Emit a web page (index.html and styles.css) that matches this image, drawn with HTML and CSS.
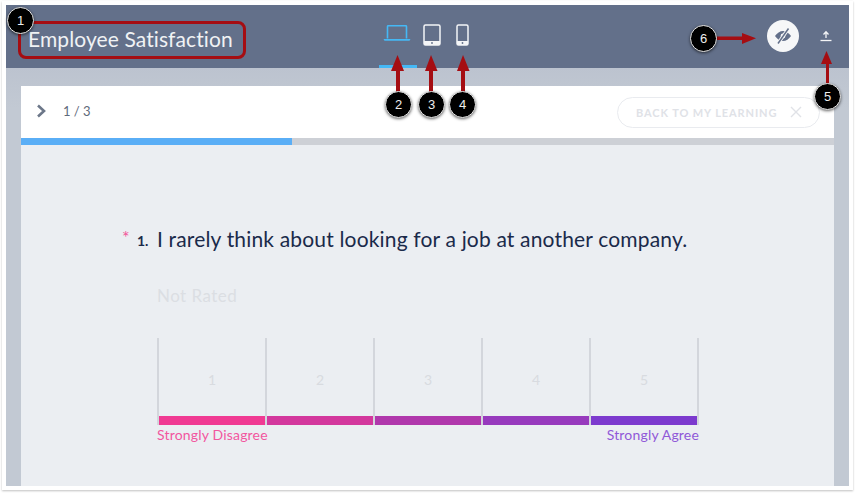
FILE: index.html
```html
<!DOCTYPE html>
<html lang="en">
<head>
  <meta charset="UTF-8">
  <meta name="viewport" content="width=device-width, initial-scale=1.0">
  <title>Employee Satisfaction</title>
  <link rel="stylesheet" href="styles.css">
</head>
<body>
  <div class="window">
    <header class="topbar">
      <h1 class="title">Employee Satisfaction</h1>
      <nav class="devices">
        <div class="device active">
          <svg width="28" height="17" viewBox="0 0 28 17"><path d="M4.500 13.500V1.700a1 1 0 0 1 1-1h17a1 1 0 0 1 1 1v11.800" fill="none" stroke="#45b8f5" stroke-width="1.600"/><path d="M0.500 14h27l-1 1.800H1.500z" fill="#45b8f5"/></svg>
        </div>
        <div class="device">
          <svg width="18" height="22" viewBox="0 0 18 22"><rect x="1" y="1" width="16" height="20" rx="1.500" fill="none" stroke="#f4f5f7" stroke-width="1.500"/><rect x="1" y="17" width="16" height="4" fill="#f4f5f7"/><circle cx="9" cy="19" r="0.900" fill="#63708a"/></svg>
        </div>
        <div class="device">
          <svg width="13" height="22" viewBox="0 0 13 22"><rect x="1" y="1" width="11" height="20" rx="1.500" fill="none" stroke="#f4f5f7" stroke-width="1.500"/><rect x="1" y="17" width="11" height="4" fill="#f4f5f7"/><circle cx="6.500" cy="19" r="0.900" fill="#63708a"/></svg>
        </div>
      </nav>
      <div class="actions">
        <button class="preview-toggle">
          <svg width="18" height="16" viewBox="0 0 18 16"><path d="M1 8c2-3 5-5 8-5s6 2 8 5c-2 3-5 5-8 5S3 11 1 8z" fill="#63708a"/><circle cx="9" cy="8" r="2.400" fill="#f6f7f8"/><path d="M14.500 0.500L4 15.500" stroke="#f6f7f8" stroke-width="3.400"/><path d="M14.500 0.500L4 15.500" stroke="#63708a" stroke-width="1.500"/></svg>
        </button>
        <button class="publish">
          <svg width="12" height="12" viewBox="0 0 12 12"><path d="M6 8V3M3.500 4.500L6 1.800l2.500 2.700" fill="none" stroke="#f4f5f7" stroke-width="1.300"/><path d="M0.500 10.500h11" stroke="#f4f5f7" stroke-width="1.300"/></svg>
        </button>
      </div>
    </header>

    <main class="stage">
      <div class="card">
        <div class="card-head">
          <svg class="chevron" width="11" height="14" viewBox="0 0 11 14"><path d="M2 1.500L8 7l-6 5.500" fill="none" stroke="#6c7789" stroke-width="2.600"/></svg>
          <span class="counter">1 / 3</span>
          <div class="back-btn">
            <span>BACK TO MY LEARNING</span>
            <svg width="12" height="12" viewBox="0 0 12 12"><path d="M1 1l10 10M11 1L1 11" stroke="#e0e2e7" stroke-width="1.400"/></svg>
          </div>
        </div>
        <div class="progress"><div class="progress-fill"></div></div>
        <div class="question">
          <div class="question-row">
            <span class="required">*</span>
            <span class="number">1.</span>
            <span class="text">I rarely think about looking for a job at another company.</span>
          </div>
          <div class="rating-label">Not Rated</div>
          <div class="scale">
            <div class="step"><span>1</span><i class="c1"></i></div>
            <div class="step"><span>2</span><i class="c2"></i></div>
            <div class="step"><span>3</span><i class="c3"></i></div>
            <div class="step"><span>4</span><i class="c4"></i></div>
            <div class="step"><span>5</span><i class="c5"></i></div>
          </div>
          <div class="scale-labels">
            <span class="low">Strongly Disagree</span>
            <span class="high">Strongly Agree</span>
          </div>
        </div>
      </div>
    </main>
  </div>

  <!-- callouts over the screenshot -->
  <div class="title-box"></div>
  <svg class="arrows" width="855" height="493" viewBox="0 0 855 493">
    <g fill="#a50d12" stroke="none">
      <rect x="396" y="68" width="4" height="25"/><path d="M391 71L397.500 55l6.500 16z"/>
      <rect x="429" y="68" width="4" height="25"/><path d="M425 71L431 55l6.500 16z"/>
      <rect x="461" y="68" width="4" height="25"/><path d="M457 71L463 55l6.500 16z"/>
      <rect x="826" y="62" width="3" height="22"/><path d="M821 64L826.500 51l5.500 13z"/>
      <rect x="716" y="36.500" width="28" height="3.500"/><path d="M742 33L756 38.300 742 44z"/>
    </g>
  </svg>
  <div class="badge b1">1</div>
  <div class="badge b2">2</div>
  <div class="badge b3">3</div>
  <div class="badge b4">4</div>
  <div class="badge b5">5</div>
  <div class="badge b6">6</div>
</body>
</html>
```

FILE: styles.css
```css
html, body {
  margin: 0;
  height: 493px;
  overflow: hidden;
}

body {
  background: #fff;
  font-family: 'Lato', sans-serif;
  padding: 5px 6px 7px;
  box-sizing: border-box;
  position: relative;
}

.window {
  height: 481px;
  display: flex;
  flex-direction: column;
  box-shadow: 0 0 0 4px #fff, 0 1px 2px 4px #c0c0c0;
}

.topbar {
  flex: 0 0 63px;
  background: #63708a;
  display: grid;
  grid-template-columns: 1fr auto 1fr;
  align-items: start;
}

.title {
  margin: 20px 0 0 22px;
  font-size: 21px;
  font-weight: 400;
  line-height: 28px;
  letter-spacing: 0.1px;
  color: #f0f2f4;
  white-space: nowrap;
}

.devices {
  display: flex;
  align-items: flex-start;
  margin-left: -8px;
}

.device {
  height: 63px;
  box-sizing: border-box;
  padding-top: 19px;
  margin-right: 15px;
  display: flex;
  justify-content: center;
}

.device.active {
  width: 38px;
  margin-right: 6px;
  border-bottom: 3px solid #45b8f5;
  padding: 20px 2px 0 0;
}

.device + .device + .device {
  margin-right: 0;
  margin-left: 0;
}

.actions {
  display: flex;
  justify-content: flex-end;
  align-items: center;
  height: 63px;
  gap: 21px;
  padding-right: 17px;
}

.actions button {
  border: 0;
  padding: 0;
  display: flex;
  align-items: center;
  justify-content: center;
  background: none;
}

.actions .preview-toggle {
  width: 32px;
  height: 32px;
  border-radius: 50%;
  background: #f6f7f8;
  margin-top: -1px;
}

.publish {
  width: 12px;
  height: 12px;
  margin-top: -1px;
}

.stage {
  flex: 1;
  min-height: 0;
  background: linear-gradient(#bcc3cf, #c2c9d3 40px);
  padding: 18px 15px 0;
}

.card {
  height: 100%;
  display: flex;
  flex-direction: column;
  background: #ebeef2;
}

.card-head {
  flex: 0 0 52px;
  background: #fff;
  display: flex;
  align-items: center;
  padding: 0 14px 0 15px;
}

.chevron {
  margin-top: -2px;
}

.counter {
  margin: -2px 0 0 16px;
  font-size: 13px;
  color: #5f6a7b;
}

.back-btn {
  margin: 0 0 0 auto;
  width: 203px;
  height: 31px;
  box-sizing: border-box;
  border: 1px solid #e9ebef;
  border-radius: 16px;
  display: flex;
  align-items: center;
  justify-content: space-between;
  padding: 0 17px 0 18px;
  font-size: 11px;
  font-weight: 700;
  letter-spacing: 0.9px;
  color: #e0e2e7;
}

.progress {
  flex: 0 0 7px;
  background: #cdd0d6;
}

.progress-fill {
  width: 271px;
  height: 100%;
  background: #5aaef6;
}

.question {
  padding: 79px 0 0 101px;
}

.question-row {
  display: flex;
  align-items: baseline;
  color: #1a2a4a;
}

.required {
  font-size: 18px;
  color: #f2569b;
  width: 15px;
  position: relative;
  top: -3px;
}

.number {
  font-size: 14px;
  font-weight: 700;
  width: 20px;
  position: relative;
  top: -1px;
}

.text {
  font-size: 21px;
  line-height: 30px;
  letter-spacing: 0.17px;
  white-space: nowrap;
}

.rating-label {
  margin: 30px 0 0 35px;
  font-size: 17px;
  line-height: 24px;
  letter-spacing: 0.45px;
  color: #dbdee3;
}

.scale {
  margin: 30px 0 0 35px;
  width: 542px;
  display: flex;
  border-right: 2px solid #d3d6dc;
  height: 87px;
  box-sizing: border-box;
}

.step {
  flex: 1;
  border-left: 2px solid #d3d6dc;
  display: flex;
  flex-direction: column;
  justify-content: flex-end;
  align-items: center;
}

.step span {
  font-size: 14px;
  line-height: 18px;
  color: #d8dbe0;
  margin-bottom: 27px;
}

.step i {
  display: block;
  width: 100%;
  height: 9px;
}

.c1 { background: #f03a93; }
.c2 { background: #d3389d; }
.c3 { background: #b038ac; }
.c4 { background: #973abd; }
.c5 { background: #7c3ace; }

.scale-labels {
  margin: 1px 0 0 35px;
  width: 542px;
  display: flex;
  justify-content: space-between;
  font-size: 14px;
  line-height: 18px;
  letter-spacing: 0.18px;
}

.low { color: #f2569f; }
.high { color: #9058d8; }

.title-box {
  position: absolute;
  left: 18px;
  top: 21px;
  width: 228px;
  height: 38px;
  box-sizing: border-box;
  border: 3px solid #a50d12;
  border-radius: 8px;
}

.arrows {
  position: absolute;
  left: 0;
  top: 0;
}

.badge {
  position: absolute;
  width: 27px;
  height: 27px;
  box-sizing: border-box;
  border-radius: 50%;
  background: #000;
  border: 1px solid #e8e8e8;
  box-shadow: 0 1px 3px rgba(0,0,0,0.6);
  color: #eee;
  font-family: 'Liberation Sans', sans-serif;
  font-size: 13px;
  line-height: 25px;
  text-align: center;
}

.b1 { left: 7px; top: 7px; }
.b2 { left: 385px; top: 91px; }
.b3 { left: 418px; top: 91px; }
.b4 { left: 449px; top: 91px; }
.b5 { left: 814px; top: 83px; }
.b6 { left: 690px; top: 25px; }
```
